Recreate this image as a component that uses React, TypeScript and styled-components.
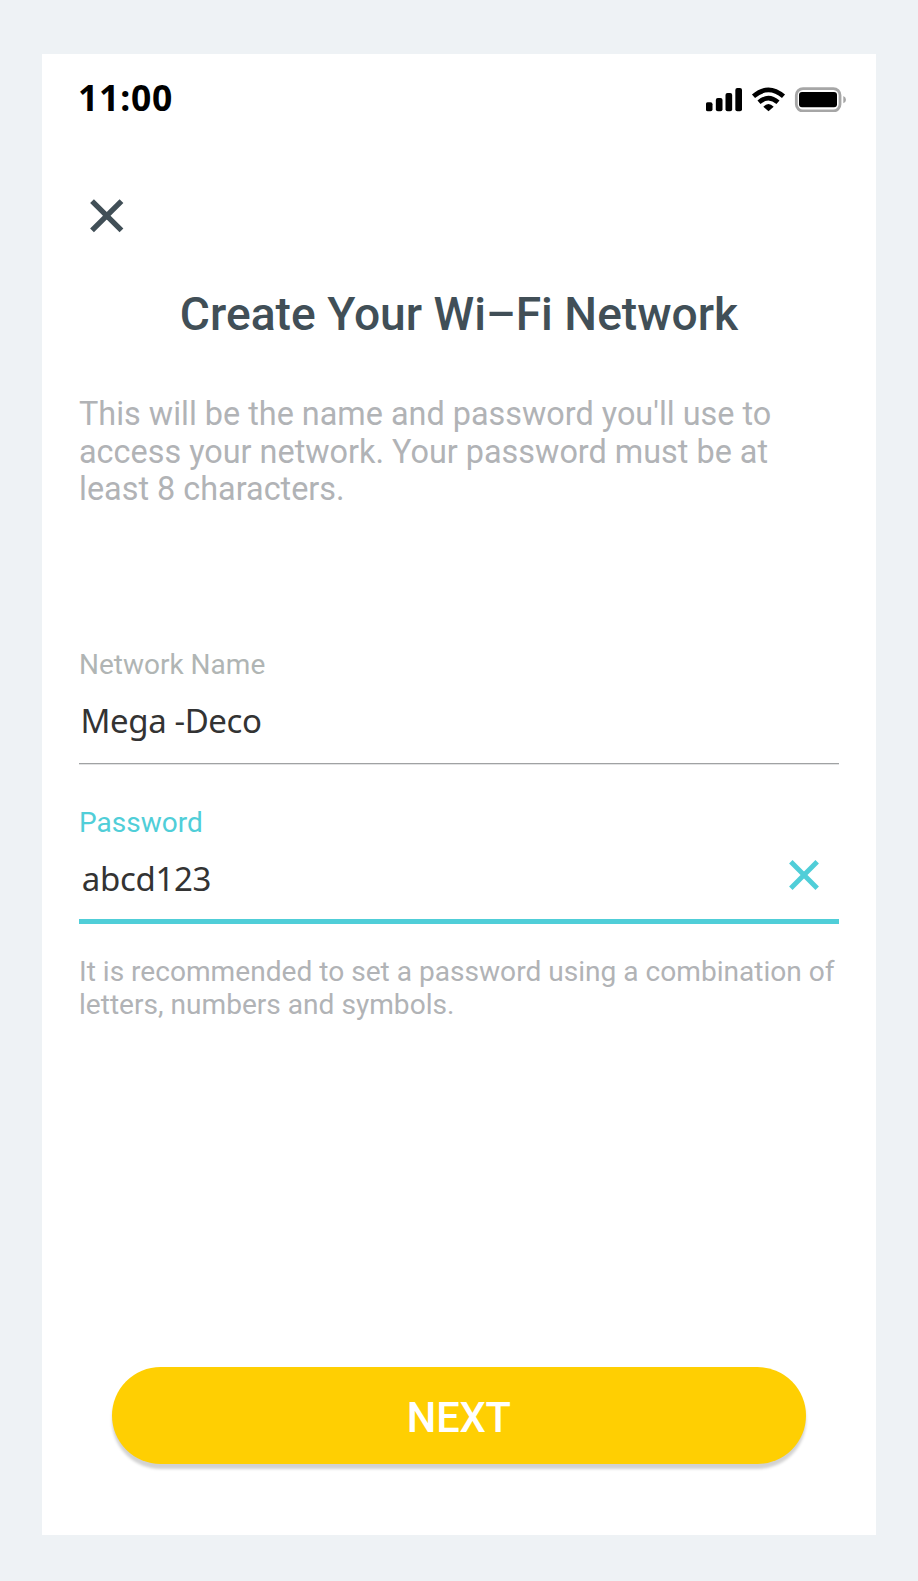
import React from "react";
import styled, { createGlobalStyle } from "styled-components";

const GlobalStyle = createGlobalStyle`
  * { box-sizing: border-box; }
  body { margin: 0; background: #eef2f5; font-family: Roboto, "Liberation Sans", sans-serif; }
  h1, p { margin: 0; }
`;

const Page = styled.main`
  min-height: 1581px;
  padding: 54px 42px 46px;
  background: #eef2f5;
`;

const Screen = styled.section`
  display: flex;
  flex-direction: column;
  width: 833.5px;
  height: 1481px;
  padding: 23px 36.5px 0 37px;
  background: #fff;
`;

const StatusBar = styled.header`
  display: flex;
  justify-content: space-between;
  align-items: flex-start;
  height: 40px;
  margin-right: -7px;
`;

const Time = styled.span`
  font: 700 35.5px/40px "Noto Sans", sans-serif;
  letter-spacing: 0.8px;
  color: #000;
  margin-left: -1px;
`;

const StatusIcons = styled.svg`
  width: 140px;
  height: 25px;
  margin-top: 10px;
`;

const IconButton = styled.button<{ $size: number; $color: string }>`
  display: block;
  width: ${(p) => p.$size}px;
  height: ${(p) => p.$size}px;
  padding: 0;
  border: 0;
  background: none;
  color: ${(p) => p.$color};
  svg { display: block; width: 100%; height: 100%; }
`;

const CloseBar = styled.nav`
  margin: 82px 0 0 11px;
`;

const Title = styled.h1`
  margin-top: 54.5px;
  font-size: 46.2px;
  line-height: 54px;
  font-weight: 500;
  text-align: center;
  white-space: nowrap;
  color: #414f57;
`;

const Description = styled.p`
  margin-top: 54.8px;
  font-size: 32.4px;
  line-height: 37.7px;
  white-space: nowrap;
  color: #b1b3b6;
`;

const Form = styled.form`
  display: flex;
  flex-direction: column;
  gap: 43px;
  margin-top: 139.7px;
`;

const Field = styled.div<{ $active?: boolean }>`
  display: flex;
  flex-direction: column;
  height: ${(p) => (p.$active ? 117 : 115)}px;
  border-bottom: ${(p) => (p.$active ? "5px solid #50ced8" : "1px solid #a0a2a3")};
  box-shadow: ${(p) => (p.$active ? "none" : "0 1px 0 #e2e3e4")};
`;

const Label = styled.label<{ $active?: boolean }>`
  font-size: 28px;
  line-height: 32px;
  color: ${(p) => (p.$active ? "#50ced8" : "#b0b5b4")};
`;

const ValueRow = styled.div`
  display: flex;
  justify-content: space-between;
  align-items: flex-start;
  margin-top: 15px;
  padding-right: 20px;
`;

const Value = styled.span<{ $left: number; $spacing: number }>`
  margin: 3px 0 0 ${(p) => p.$left}px;
  font: 400 33px/44px "Noto Sans", sans-serif;
  letter-spacing: ${(p) => p.$spacing}px;
  color: #333;
`;

const ClearSlot = styled.div`
  margin-top: 6.5px;
`;

const Hint = styled.p`
  margin-top: 32.5px;
  font-size: 28.1px;
  line-height: 32.9px;
  white-space: nowrap;
  color: #b1b3b6;
`;

const Footer = styled.footer`
  margin: auto -0.5px 71px 32.5px;
`;

const NextButton = styled.button`
  display: block;
  width: 694.5px;
  height: 97px;
  padding: 4px 0 0;
  border: 0;
  border-radius: 49px;
  background: #ffcf02;
  box-shadow: 0 5px 3px rgba(0, 0, 0, 0.18);
  font: 500 41.6px/50px Roboto, sans-serif;
  letter-spacing: -0.2px;
  color: #fff;
`;

function Cross({ stroke }: { stroke: number }) {
  return (
    <svg viewBox="0 0 33 33" aria-hidden="true">
      <path d="M2 2L31 31M31 2L2 31" stroke="currentColor" strokeWidth={stroke} fill="none" />
    </svg>
  );
}

export default function App() {
  return (
    <>
      <GlobalStyle />
      <Page>
        <Screen>
          <StatusBar>
            <Time>11:00</Time>
            <StatusIcons viewBox="48 51 420 75" aria-hidden="true">
              <rect x="47.5" y="97" width="20" height="27" rx="6" />
              <rect x="77.5" y="84" width="20" height="40" rx="6" />
              <rect x="106.5" y="69" width="20" height="55" rx="6" />
              <rect x="136" y="54" width="20" height="70" rx="6" />
              <g fill="none" stroke="#000" strokeWidth="14">
                <path d="M190.500 79Q235 40 280.500 79" />
                <path d="M207 97Q235 72 264 97" />
              </g>
              <path d="M220 110Q235 94 251 110L235.500 124Z" />
              <rect x="319" y="56" width="131" height="67" rx="20" fill="none" stroke="#a6a6a6" strokeWidth="8.500" />
              <rect x="327" y="66" width="114" height="46" rx="9" />
              <path d="M460 78Q468 82 468 89Q468 96 460 100Z" fill="#a6a6a6" />
            </StatusIcons>
          </StatusBar>
          <CloseBar>
            <IconButton $size={33.5} $color="#414f57" aria-label="Close">
              <Cross stroke={5.3} />
            </IconButton>
          </CloseBar>
          <Title>Create Your Wi–Fi Network</Title>
          <Description>
            This will be the name and password you'll use to
            <br />
            access your network. Your password must be at
            <br />
            least 8 characters.
          </Description>
          <Form>
            <Field>
              <Label>Network Name</Label>
              <ValueRow>
                <Value $left={1.5} $spacing={-0.4}>Mega -Deco</Value>
              </ValueRow>
            </Field>
            <Field $active>
              <Label $active>Password</Label>
              <ValueRow>
                <Value $left={2.7} $spacing={-0.3}>abcd123</Value>
                <ClearSlot>
                  <IconButton type="button" $size={30} $color="#50ced8" aria-label="Clear password">
                    <Cross stroke={5.4} />
                  </IconButton>
                </ClearSlot>
              </ValueRow>
            </Field>
          </Form>
          <Hint>
            It is recommended to set a password using a combination of
            <br />
            letters, numbers and symbols.
          </Hint>
          <Footer>
            <NextButton type="button">NEXT</NextButton>
          </Footer>
        </Screen>
      </Page>
    </>
  );
}
